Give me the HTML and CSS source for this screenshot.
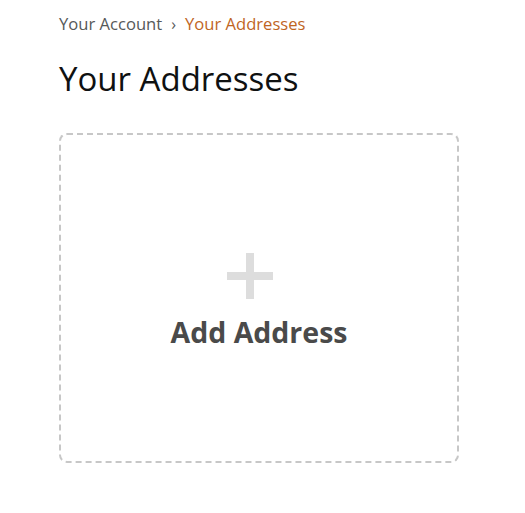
FILE: index.html
```html
<!DOCTYPE html>
<html>
<head>
<meta charset="utf-8">
<link rel="stylesheet" href="styles.css">
</head>
<body>
<div class="page">
  <nav class="crumbs">
    <a class="crumb" href="#">Your Account</a>
    <span class="sep">›</span>
    <span class="crumb current">Your Addresses</span>
  </nav>
  <h1 class="title">Your Addresses</h1>
  <a class="add-card" href="#">
    <span class="plus"></span>
    <span class="add-label">Add Address</span>
  </a>
</div>
</body>
</html>
```

FILE: styles.css
```css
html, body {
  margin: 0;
  padding: 0;
  background: #fff;
}
body {
  font-family: "Open Sans", "Liberation Sans", sans-serif;
  color: #0f1111;
}
.page {
  padding: 12px 0 0 59px;
}
.crumbs {
  display: flex;
  align-items: center;
  gap: 9px;
  font-size: 16.6px;
  line-height: 24px;
}
.crumb {
  color: #565959;
  text-decoration: none;
}
.crumb.current {
  color: #c0651f;
}
.sep {
  color: #565959;
  font-size: 16px;
}
.title {
  margin: 21px 0 0;
  font-size: 33px;
  font-weight: 400;
  line-height: 44px;
  color: #0f1111;
}
.add-card {
  margin-top: 32px;
  width: 396px;
  height: 326px;
  border: 2px dashed #c7c7c7;
  border-radius: 8px;
  display: flex;
  flex-direction: column;
  align-items: center;
  justify-content: center;
  text-decoration: none;
}
.plus {
  position: relative;
  width: 46px;
  height: 46px;
  margin: 8px 0 0 -18px;
}
.plus::before, .plus::after {
  content: "";
  position: absolute;
  background: #dddddd;
}
.plus::before {
  left: 0; right: 0; top: 19px; height: 8px;
}
.plus::after {
  top: 0; bottom: 0; left: 19px; width: 8px;
}
.add-label {
  margin-top: 14px;
  font-size: 28.5px;
  font-weight: 700;
  color: #4a4a4a;
  line-height: 38px;
}
```
